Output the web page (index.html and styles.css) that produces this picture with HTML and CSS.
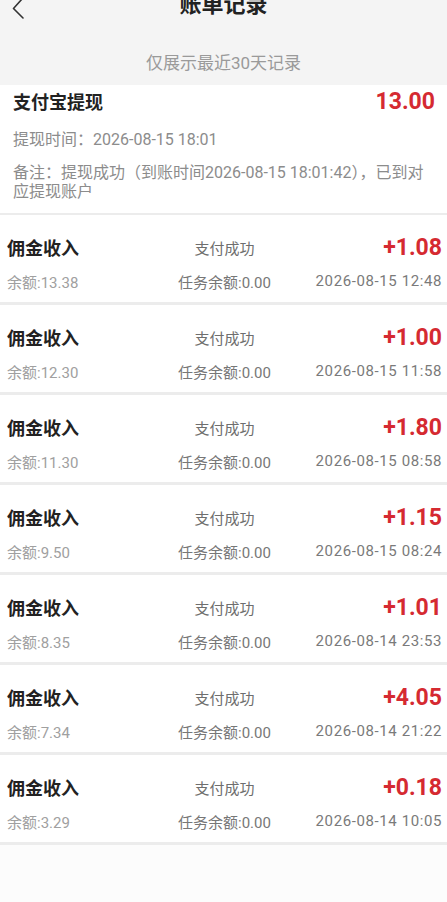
FILE: index.html
```html
<!DOCTYPE html>
<html lang="zh-CN">
<head>
<meta charset="utf-8">
<link rel="stylesheet" href="styles.css">
</head>
<body>
<div class="page">
  <header class="topbar">
    <div class="back">
      <svg width="16" height="24" viewBox="0 0 16 24"><path d="M11 3 L2.5 12.5 L12 22" fill="none" stroke="#333" stroke-width="1.6" stroke-linecap="round" stroke-linejoin="round"/></svg>
    </div>
    <h1 class="title">账单记录</h1>
    <div></div>
  </header>
  <div class="notice">仅展示最近30天记录</div>

  <section class="withdraw">
    <div class="w-head">
      <span class="w-name">支付宝提现</span>
      <span class="w-amount">13.00</span>
    </div>
    <div class="w-time">提现时间：2026-08-15 18:01</div>
    <div class="w-note">备注：提现成功（到账时间2026-08-15 18:01:42），已到对应提现账户</div>
  </section>

  <div class="list">
    <div class="row">
      <span class="r-name">佣金收入</span><span class="r-status">支付成功</span><span class="r-amount">+1.08</span>
      <span class="r-bal">余额:13.38</span><span class="r-task">任务余额:0.00</span><span class="r-date">2026-08-15 12:48</span>
    </div>
    <div class="row">
      <span class="r-name">佣金收入</span><span class="r-status">支付成功</span><span class="r-amount">+1.00</span>
      <span class="r-bal">余额:12.30</span><span class="r-task">任务余额:0.00</span><span class="r-date">2026-08-15 11:58</span>
    </div>
    <div class="row">
      <span class="r-name">佣金收入</span><span class="r-status">支付成功</span><span class="r-amount">+1.80</span>
      <span class="r-bal">余额:11.30</span><span class="r-task">任务余额:0.00</span><span class="r-date">2026-08-15 08:58</span>
    </div>
    <div class="row">
      <span class="r-name">佣金收入</span><span class="r-status">支付成功</span><span class="r-amount">+1.15</span>
      <span class="r-bal">余额:9.50</span><span class="r-task">任务余额:0.00</span><span class="r-date">2026-08-15 08:24</span>
    </div>
    <div class="row">
      <span class="r-name">佣金收入</span><span class="r-status">支付成功</span><span class="r-amount">+1.01</span>
      <span class="r-bal">余额:8.35</span><span class="r-task">任务余额:0.00</span><span class="r-date">2026-08-14 23:53</span>
    </div>
    <div class="row">
      <span class="r-name">佣金收入</span><span class="r-status">支付成功</span><span class="r-amount">+4.05</span>
      <span class="r-bal">余额:7.34</span><span class="r-task">任务余额:0.00</span><span class="r-date">2026-08-14 21:22</span>
    </div>
    <div class="row">
      <span class="r-name">佣金收入</span><span class="r-status">支付成功</span><span class="r-amount">+0.18</span>
      <span class="r-bal">余额:3.29</span><span class="r-task">任务余额:0.00</span><span class="r-date">2026-08-14 10:05</span>
    </div>
  </div>
</div>
</body>
</html>
```
FILE: styles.css
```css
html, body {
  margin: 0;
  padding: 0;
  background: #fcfcfc;
}
body {
  font-family: Roboto, "Noto Sans CJK SC", sans-serif;
  color: #222;
}
.page {
  width: 447px;
  overflow: hidden;
}
.topbar {
  margin-top: -12px;
  height: 34px;
  display: grid;
  grid-template-columns: 1fr auto 1fr;
  align-items: center;
  background: #f4f4f4;
}
.back {
  padding-left: 11px;
  display: flex;
  align-items: center;
  padding-top: 6px;
}
.title {
  margin: 0;
  font-size: 22px;
  font-weight: 700;
  line-height: 34px;
  color: #222;
}
.notice {
  background: #f4f4f4;
  text-align: center;
  font-size: 17px;
  line-height: 24px;
  color: #9a9a9a;
  padding: 29px 0 10px;
}
.withdraw {
  background: #fff;
  padding: 3px 14px 12px 13px;
  border-bottom: 2px solid #ececec;
}
.w-head {
  display: flex;
  justify-content: space-between;
  align-items: center;
  height: 26px;
}
.w-name {
  font-size: 18px;
  font-weight: 700;
  color: #222;
}
.w-amount {
  font-size: 23px;
  font-weight: 700;
  color: #d52a31;
  margin-right: -2px;
}
.w-time {
  margin-top: 16px;
  font-size: 16px;
  line-height: 19px;
  color: #8c8c8c;
}
.w-note {
  margin-top: 14px;
  font-size: 16px;
  line-height: 19px;
  color: #8c8c8c;
}
.list {
  background: #fff;
}
.row {
  display: grid;
  grid-template-columns: 1fr auto 1fr;
  grid-template-rows: 24px 24px;
  row-gap: 10px;
  align-items: center;
  padding: 20px 5px 9px 7px;
  border-bottom: 3px solid #ececec;
}
.r-name {
  font-size: 18px;
  font-weight: 700;
  color: #222;
}
.r-status {
  font-size: 15px;
  color: #6e6e6e;
  text-align: center;
}
.r-amount {
  font-size: 23px;
  font-weight: 700;
  color: #d52a31;
  text-align: right;
}
.r-bal {
  font-size: 15px;
  color: #a0a0a0;
}
.r-task {
  font-size: 15px;
  color: #777;
  text-align: center;
}
.r-date {
  font-size: 15px;
  letter-spacing: 0.6px;
  color: #7a7a7a;
  text-align: right;
}
```
